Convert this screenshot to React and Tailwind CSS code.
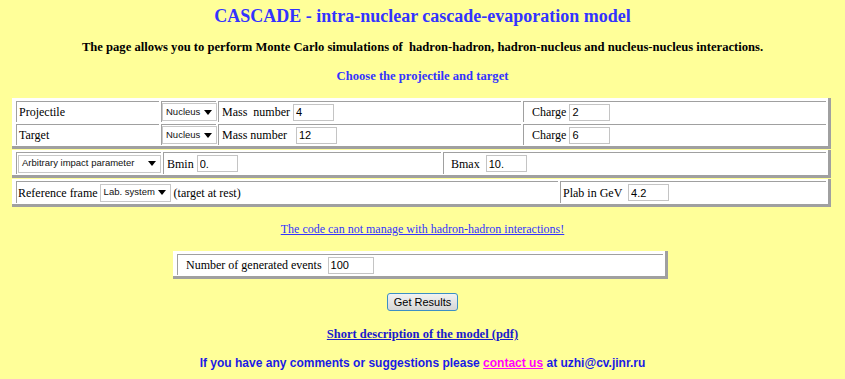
import React from 'react';

// Boîte façon vieux <table border> : bord blanc en haut/gauche, gris en bas/droite
const Box = ({ className = '', children }) => (
    <div className={`bg-white border-r-[3px] border-b-[3px] border-[#a0a0a0] ${className}`}>
        {children}
    </div>
);

const Cell = ({ className = '', children }) => (
    <div className={`flex items-center border-t border-l border-[#a0a0a0] whitespace-pre ${className}`}>
        {children}
    </div>
);

const Field = ({ value, className = 'w-[41px]' }) => (
    <input
        type="text"
        readOnly
        value={value}
        className={`h-[17px] border border-[#c4c4c4] bg-white px-[2px] text-[11px] font-['Liberation_Sans',sans-serif] text-black outline-none ${className}`}
    />
);

const Select = ({ label, className }) => (
    <div className="flex items-center justify-between gap-[3px] h-[18px] border border-[#c8c8c8] bg-white pl-[3px] pr-[4px] text-[9.5px] font-['Liberation_Sans',sans-serif] text-[#111]">
        <span className={className}>{label}</span>
        <svg width="8" height="5" viewBox="0 0 8 5"><path d="M0 0h8L4 5z" fill="#000" /></svg>
    </div>
);

const App = () => {
    return (
        <div className="min-h-screen bg-[#ffff99] pt-[5px] font-['Liberation_Serif',serif]">
            <h1 className="text-center text-[18px] leading-[22px] font-bold text-[#3333ff]">
                CASCADE - intra-nuclear cascade-evaporation model
            </h1>
            <p className="mt-[12px] text-center text-[12.6px] leading-[16px] font-bold text-black whitespace-pre">
                The page allows you to perform Monte Carlo simulations of  hadron-hadron, hadron-nucleus and nucleus-nucleus interactions.
            </p>
            <p className="mt-[13px] text-center text-[12.6px] leading-[16px] font-bold text-[#3333ff]">
                Choose the projectile and target
            </p>

            {/* Projectile / cible */}
            <Box className="ml-[12px] mt-[14px] w-[819px] pl-[4px] pt-[3px] pr-[2px] pb-px flex flex-col gap-[2px] text-[12px]">
                <div className="flex gap-[2px] h-[21px]">
                    <Cell className="w-[143px] pl-[2px]">Projectile</Cell>
                    <Cell className="w-[55px]"><Select label="Nucleus" className="w-[35px]" /></Cell>
                    <Cell className="w-[303px] pl-[3px]">Mass  number <Field value="4" /></Cell>
                    <Cell className="flex-1 pl-[8px]">Charge <Field value="2" /></Cell>
                </div>
                <div className="flex gap-[2px] h-[21px]">
                    <Cell className="w-[143px] pl-[2px]">Target</Cell>
                    <Cell className="w-[55px]"><Select label="Nucleus" className="w-[35px]" /></Cell>
                    <Cell className="w-[303px] pl-[3px]">Mass number   <Field value="12" /></Cell>
                    <Cell className="flex-1 pl-[8px]">Charge <Field value="6" /></Cell>
                </div>
            </Box>

            {/* Paramètre d'impact */}
            <Box className="ml-[12px] mt-px w-[819px] pl-[4px] pt-[2px] pr-[2px] pb-px flex gap-[2px] h-[28px] text-[12px]">
                <Cell className="w-[145px] pl-px"><Select label="Arbitrary impact parameter" className="w-[123px]" /></Cell>
                <Cell className="w-[278px] pl-[3px]">Bmin <Field value="0." /></Cell>
                <Cell className="flex-1 pl-[7px]">Bmax  <Field value="10." /></Cell>
            </Box>

            {/* Référentiel */}
            <Box className="ml-[12px] mt-px w-[819px] pl-[4px] pt-[2px] pr-[2px] pb-px flex gap-[2px] h-[28px] text-[12px]">
                <Cell className="w-[542px] pl-[1px]">
                    Reference frame<span className="w-[2px]" /><Select label="Lab. system" className="w-[51px]" /> (target at rest)
                </Cell>
                <Cell className="flex-1 pl-[2px]">Plab in GeV  <Field value="4.2" /></Cell>
            </Box>

            <p className="mt-[14px] text-center text-[12px] leading-[16px]">
                <a href="#" className="text-[#3333ff] underline">The code can not manage with hadron-hadron interactions!</a>
            </p>

            {/* Nombre d'événements */}
            <Box className="ml-[173px] mt-[14px] w-[495px] pl-[4px] pt-[3px] pr-[2px] pb-px h-[28px] flex text-[12px]">
                <Cell className="flex-1 pl-[8px]">Number of generated events  <Field value="100" className="w-[46px]" /></Cell>
            </Box>

            <div className="mt-[14px] flex justify-center">
                <button className="h-[18px] w-[71px] rounded-[3px] border border-[#3c8fc4] bg-gradient-to-b from-[#f2f2f2] to-[#d6d6d6] text-[11px] leading-none font-['Liberation_Sans',sans-serif] text-black">
                    Get Results
                </button>
            </div>

            <p className="mt-[15px] text-center text-[12.5px] leading-[16px] font-bold">
                <a href="#" className="text-[#1a1acc] underline">Short description of the model (pdf)</a>
            </p>

            <p className="mt-[13px] text-center text-[12px] leading-[16px] font-bold font-['Liberation_Sans',sans-serif] text-[#1a1ae6]">
                If you have any comments or suggestions please <a href="#" className="text-[#ff00ff] underline">contact us</a> at uzhi@cv.jinr.ru
            </p>
        </div>
    );
};

export default App;
